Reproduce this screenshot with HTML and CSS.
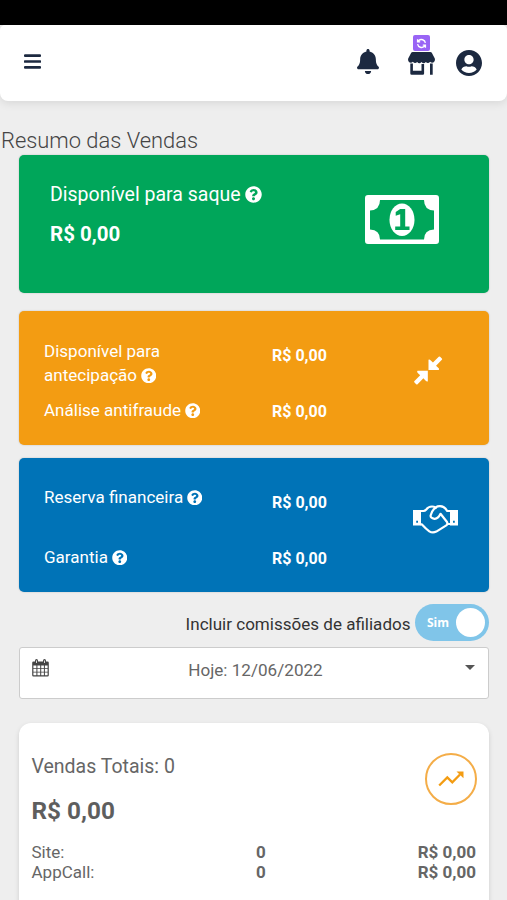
FILE: index.html
```html
<!DOCTYPE html>
<html lang="pt-BR">
<head>
<meta charset="utf-8">
<meta name="viewport" content="width=device-width, initial-scale=1">
<title>Resumo das Vendas</title>
<link rel="stylesheet" href="styles.css">
</head>
<body>
<svg class="defs" aria-hidden="true">
  <symbol id="help" viewBox="0 0 512 512"><path d="M504 256c0 136.997-111.043 248-248 248S8 392.997 8 256C8 119.083 119.043 8 256 8s248 111.083 248 248zM262.655 90c-54.497 0-89.255 22.957-116.549 63.758-3.536 5.286-2.353 12.415 2.715 16.258l34.699 26.31c5.205 3.947 12.621 3.008 16.665-2.122 17.864-22.658 30.113-35.797 57.303-35.797 20.429 0 45.698 13.148 45.698 32.958 0 14.976-12.363 22.667-32.534 33.976C247.128 238.528 216 254.941 216 296v4c0 6.627 5.373 12 12 12h56c6.627 0 12-5.373 12-12v-1.333c0-28.462 83.186-29.647 83.186-106.667 0-58.002-60.165-102-116.531-102zM256 338c-25.365 0-46 20.635-46 46 0 25.364 20.635 46 46 46s46-20.636 46-46c0-25.364-20.635-46-46-46z"/></symbol>
</svg>
<div class="status-bar"></div>
<header class="topbar">
  <svg class="menu" viewBox="0 0 16 14"><path d="M1 1.5h14M1 7h14M1 12.5h14" stroke="currentColor" stroke-width="2.5" stroke-linecap="round"/></svg>
  <div class="actions">
    <svg class="bell" viewBox="0 0 448 512" preserveAspectRatio="none"><path d="M224 512c35.32 0 63.97-28.65 63.97-64H160.03c0 35.35 28.65 64 63.97 64zm215.39-149.71c-19.32-20.76-55.47-51.99-55.47-154.29 0-77.7-54.48-139.9-127.94-155.16V32c0-17.67-14.32-32-31.98-32s-31.98 14.33-31.98 32v20.84C118.56 68.1 64.08 130.3 64.08 208c0 102.3-36.15 133.53-55.47 154.29-6 6.45-8.66 14.16-8.61 21.71.11 16.4 12.98 32 32.1 32h383.8c19.12 0 32-15.6 32.1-32 .05-7.55-2.61-15.27-8.61-21.71z"/></svg>
    <div class="store">
      <svg class="store-icon" viewBox="0 0 27 23"><path d="M4.7 0h17.6q1 0 1.5.8l3 5.8q.6 2.5-1 3.6-1.800 1.200-3.700-.5-2 2.600-4.300.3-2.100 2.500-4.300 0-2.200 2.500-4.300 0-2.300 2.300-4.300-.3-1.900 1.700-3.700.500-1.600-1.100-1-3.600l3-5.800q.5-.8 1.500-.8z"/><path d="M2.300 11.500h2.600v7.300h8.600v-6.800h2.600v9.500q0 1.300-1.200 1.300H3.600q-1.300 0-1.300-1.300zM22 11.500h2.700v11.300H22z"/></svg>
      <span class="sync"><svg viewBox="0 0 16 16"><path d="M12.800 7.200A4.900 4.900 0 0 0 4.500 4.600L3.200 6M3.200 2.800V6h3.200M3.200 8.800a4.900 4.900 0 0 0 8.300 2.600L12.800 10M12.800 13.200V10H9.600" fill="none" stroke="#fff" stroke-width="1.700"/></svg></span>
    </div>
    <svg class="user" viewBox="0 8 496 496"><path d="M248 8C111 8 0 119 0 256s111 248 248 248 248-111 248-248S385 8 248 8zm0 96c48.600 0 88 39.400 88 88s-39.400 88-88 88-88-39.400-88-88 39.400-88 88-88zm0 344c-58.700 0-111.300-26.600-146.500-68.200 18.800-35.400 55.600-59.800 98.500-59.800 2.400 0 4.800.4 7.100 1.100 13 4.200 26.600 6.900 40.900 6.900 14.300 0 28-2.700 40.900-6.900 2.300-.7 4.700-1.100 7.100-1.100 42.900 0 79.700 24.400 98.500 59.800C359.300 421.400 306.700 448 248 448z"/></svg>
  </div>
</header>
<main>
  <h1>Resumo das Vendas</h1>
  <section class="card available">
    <div>
      <p class="title">Disponível para saque <svg class="help"><use href="#help"/></svg></p>
      <strong>R$ 0,00</strong>
    </div>
    <svg class="money" viewBox="0 0 74 49"><path fill-rule="evenodd" d="M3 0h68q3 0 3 3v43q0 3-3 3H3q-3 0-3-3V3Q0 0 3 0zM15 5q0 10-10 10.500v19Q15 35 15 44.500h44Q59 35 69 34.500v-19Q59 15 59 5z"/><ellipse cx="37" cy="24.700" rx="12.500" ry="16.200"/><path class="numeral" d="M35.200 14h5v17.500h4.300V35H30.200v-3.500h5V19.300l-4.500 1.400V17z"/></svg>
  </section>
  <section class="card split anticipation">
    <div class="labels">
      <p>Disponível para antecipação <svg class="help"><use href="#help"/></svg></p>
      <p>Análise antifraude <svg class="help"><use href="#help"/></svg></p>
    </div>
    <div class="values"><strong>R$ 0,00</strong><strong>R$ 0,00</strong></div>
    <svg class="arrows" viewBox="0 0 30 30"><path d="M15 4v10.500h10.500q1-1-.2-2.200L22.800 10l6-6q.6-.7 0-1.400L27 .8q-.7-.7-1.400 0l-6 6-2.500-2.400Q16 3.300 15 4zM14.300 26V15.300H3.700q-1 1 .2 2.200L6.400 20l-5.900 5.900q-.7.7 0 1.400l1.800 1.800q.7.700 1.400 0l6-6 2.400 2.400q1.200 1.200 2.200.5z"/></svg>
  </section>
  <section class="card split reserve">
    <div class="labels">
      <p>Reserva financeira <svg class="help"><use href="#help"/></svg></p>
      <p>Garantia <svg class="help"><use href="#help"/></svg></p>
    </div>
    <div class="values"><strong>R$ 0,00</strong><strong>R$ 0,00</strong></div>
    <svg class="hands" viewBox="0 0 45 29"><path fill-rule="evenodd" d="M0 5h8v15.500H0zM3.200 15.700v2.100h1.800v-2.100zM37 5h8v15.500h-8zM40 15.700v2.100h1.800v-2.100z"/><path d="M7.500 6h3q1.500 0 2.500-1.200Q15.300 1.500 19 1.500q2 0 3.500 1Q24.500 1.200 27 1.200q4.500 0 7.200 4.800h3.500M7.500 19.300h1.200Q13 24 16.300 26.300q3.300 2.200 7 .3l10-6.200q1.700-1.500.7-3.400L27.500 8.800q-2.500 5.200-6 5-4.500-.7-3.800-3.600.8-3.600 3.300-6.200 1.300-1.200 2.800-1.600M37.500 19h-4" fill="none" stroke="#fff" stroke-width="2.200" stroke-linejoin="round"/></svg>
  </section>
  <label class="commission"><span>Incluir comissões de afiliados</span><span class="toggle">Sim<i></i></span></label>
  <div class="period">
    <svg class="calendar" viewBox="0 0 17 18"><path fill-rule="evenodd" d="M1.500 2.500H3V1.700Q3 0 4.500 0T6 1.700v.8h5v-.8Q11 0 12.500 0T14 1.700v.8h1.500q1.300 0 1.300 1.300v12.400q0 1.300-1.300 1.300h-14Q.2 17.500.2 16.200V3.800q0-1.300 1.300-1.300zM1.400 6.500v2.700h3V6.500zm4 0v2.700h2.800V6.500zm3.800 0v2.700h2.700V6.500zm3.700 0v2.700h2.700V6.500zM1.400 10.100v2.600h3v-2.600zm4 0v2.600h2.800v-2.600zm3.800 0v2.600h2.700v-2.600zm3.700 0v2.600h2.700v-2.600zM1.400 13.600v2.700h3v-2.700zm4 0v2.700h2.800v-2.700zm3.800 0v2.700h2.700v-2.700zm3.700 0v2.700h2.700v-2.700zM4.100 1.500V4h.8V1.500zm8 0V4h.8V1.500z"/></svg>
    <span>Hoje: 12/06/2022</span>
    <i class="caret"></i>
  </div>
  <section class="totals">
    <div class="totals-head">
      <div><h2>Vendas Totais: 0</h2><strong>R$ 0,00</strong></div>
      <div class="trend"><svg viewBox="0 0 26 18"><path d="M1.200 15.500 9.300 7.400l5 5L22 4.500" fill="none" stroke="currentColor" stroke-width="2.300"/><path d="M18.500 1.500h7v6.800z" fill="currentColor"/></svg></div>
    </div>
    <div class="row"><span>Site:</span><b>0</b><b>R$ 0,00</b></div>
    <div class="row"><span>AppCall:</span><b>0</b><b>R$ 0,00</b></div>
  </section>
</main>
</body>
</html>
```
FILE: styles.css
```css
* { box-sizing: border-box; }
body { margin: 0; height: 900px; overflow: hidden; background: #eee; font-family: Roboto, sans-serif; color: #666; }
h1, h2, p { margin: 0; font-weight: 400; }
svg { display: block; flex: none; fill: currentColor; }
.defs { position: absolute; width: 0; height: 0; }
strong, b { font-weight: 700; }
.status-bar { height: 25px; background: #000; }
.topbar { height: 76px; padding: 0 25px 0 24px; display: flex; justify-content: space-between; background: #fff; color: #1c2940; border-radius: 5px 5px 8px 8px; box-shadow: 0 2px 10px #0000001a; }
.menu { width: 17px; height: 15px; margin-top: 29px; }
.actions { display: flex; align-items: flex-start; }
.bell { width: 22px; height: 25px; margin-top: 24px; }
.store { display: flex; flex-direction: column-reverse; align-items: center; width: 27px; margin: 10px 21px 0 29.5px; }
.store-icon { width: 27px; height: 23px; margin-top: 1px; }
.sync { width: 17px; height: 16px; border-radius: 2px; background: #9964f5; display: grid; place-items: center; }
.sync svg { width: 13px; height: 13px; }
.user { width: 26px; height: 26px; margin-top: 25px; }
h1 { height: 53.5px; padding: 25px 0 0 1px; font-size: 21.9px; line-height: 29px; font-weight: 300; color: #444; white-space: nowrap; }
.card { margin: 0 18px 0 19px; border-radius: 5px; color: #fff; box-shadow: 0 0 2px #0003; }
.help { display: inline-block; fill: currentColor; vertical-align: -2px; }
.available { height: 138.5px; padding: 27.5px 50px 0 31px; display: flex; justify-content: space-between; background: #00a65a; }
.title { font-size: 19.5px; line-height: 26px; }
.title .help { width: 17px; height: 17px; }
.available strong { display: block; margin-top: 13px; font-size: 20.5px; line-height: 26px; }
.money { width: 74px; height: 49px; margin-top: 13px; }
.numeral { fill: #00a65a; }
.split { height: 134px; display: grid; grid-template-columns: 228px 142px 1fr; padding-left: 25px; font-size: 17.05px; line-height: 24px; }
.anticipation { margin-top: 18px; background: #f39c12; }
.reserve { margin-top: 13px; background: #0073b7; }
.split .help { width: 15.5px; height: 15.5px; margin-left: -.5px; }
.labels { display: flex; flex-direction: column; width: 180px; padding-top: 28px; gap: 11px; }
.anticipation .labels p:first-child { width: 130px; }
.reserve .labels { padding-top: 27px; gap: 36px; }
.values { display: flex; flex-direction: column; gap: 32px; padding-top: 33px; font-size: 16px; }
.arrows { width: 29px; height: 29px; margin-top: 45px; }
.hands { width: 45px; height: 29px; margin: 46.5px 0 0 -1px; }
.commission { height: 37px; margin: 12px 18px 6px; display: flex; justify-content: flex-end; align-items: center; gap: 4.5px; color: #333; font-size: 17.05px; white-space: nowrap; }
.commission > span:first-child { padding-top: 2px; }
.toggle { width: 74px; height: 37px; padding: 0 4px 0 12px; border-radius: 19px; background: #80c5e9; color: #fff; display: flex; align-items: center; justify-content: space-between; font: 700 12px "Open Sans", sans-serif; }
.toggle i { width: 29px; height: 29px; border-radius: 50%; background: #fff; }
.period { height: 52px; margin: 0 18px 0 19px; padding: 11px 13px 0 12px; display: grid; grid-template-columns: 17px 1fr 10px; border: 1px solid #ccc; border-radius: 3px; background: #fff; font-size: 17.1px; line-height: 22px; text-align: center; }
.period span { padding-right: 3px; }
.calendar { width: 17px; height: 18px; color: #444; }
.caret { width: 10px; height: 5px; margin-top: 6px; background: #555; clip-path: polygon(0 0, 100% 0, 50% 100%); }
.totals { height: 200px; margin: 24px 18px 0 19px; padding: 29px 13px 0 12.5px; border-radius: 12px; background: #fff; box-shadow: 0 2px 5px #0002; }
.totals-head { display: flex; justify-content: space-between; height: 91px; }
h2 { font-size: 19.5px; line-height: 29px; }
.totals-head strong { display: block; margin-top: 15px; font-size: 24.3px; line-height: 30px; color: #5e5e5e; }
.trend { width: 52px; height: 52px; margin: 1px -1px 0 0; border: 2px solid #f4ad48; border-radius: 50%; color: #f39c12; display: grid; place-items: center; }
.trend svg { width: 26px; height: 18px; }
.row { display: grid; grid-template-columns: 224.5px 80px 1fr; font-size: 17px; line-height: 19.5px; }
.row b:last-child { text-align: right; }
```
